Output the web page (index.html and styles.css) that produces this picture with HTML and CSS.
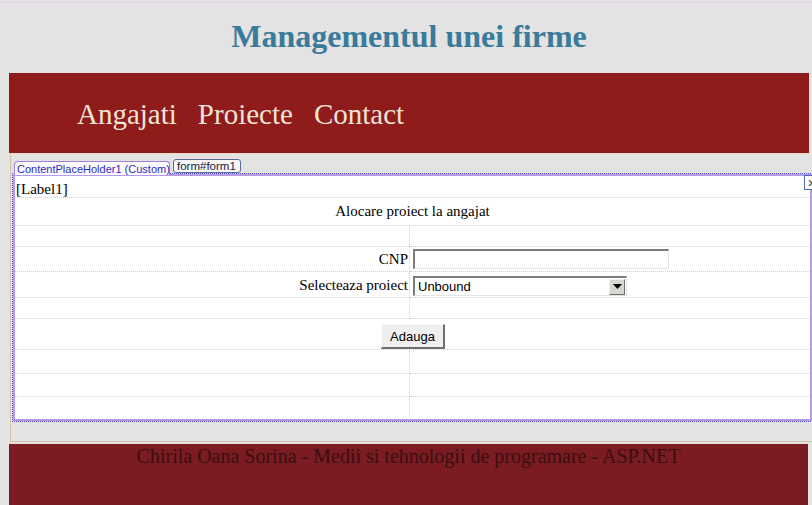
FILE: index.html
```html
<!DOCTYPE html>
<html lang="ro">
<head>
<meta charset="utf-8">
<title>Managementul unei firme</title>
<link rel="stylesheet" href="styles.css">
</head>
<body>
<div class="page">
  <header class="header">
    <h1 class="title">Managementul unei firme</h1>
  </header>
  <nav class="nav">
    <a class="nav-link">Angajati</a>
    <a class="nav-link">Proiecte</a>
    <a class="nav-link">Contact</a>
  </nav>
  <main class="content">
    <div class="tabs">
      <span class="tab tab-cph">ContentPlaceHolder1 (Custom)</span>
      <span class="tab tab-form">form#form1</span>
    </div>
    <div class="designer">
      <div class="panel">
        <span class="close-box">&#8250;</span>
        <div class="label-line">[Label1]</div>
        <div class="form-grid">
          <div class="cell span2 row-title">Alocare proiect la angajat</div>
          <div class="cell left row-gap1"></div><div class="cell row-gap1"></div>
          <div class="cell left row-cnp">CNP</div>
          <div class="cell row-cnp"><input class="text-input" type="text"></div>
          <div class="cell left row-sel">Selecteaza proiect</div>
          <div class="cell row-sel">
            <div class="select-box"><span class="select-text">Unbound</span><span class="select-btn"><svg width="9" height="5" viewBox="0 0 9 5"><path d="M0 0h9L4.5 5z" fill="#000"/></svg></span></div>
          </div>
          <div class="cell left row-gap2"></div><div class="cell row-gap2"></div>
          <div class="cell span2 row-btn"><button class="btn" type="button">Adauga</button></div>
          <div class="cell left row-e1"></div><div class="cell row-e1"></div>
          <div class="cell left row-e2"></div><div class="cell row-e2"></div>
          <div class="cell left row-e3 last"></div><div class="cell row-e3 last"></div>
        </div>
      </div>
    </div>
  </main>
  <footer class="footer">Chirila Oana Sorina - Medii si tehnologii de programare - ASP.NET</footer>
</div>
</body>
</html>
```

FILE: styles.css
```css
html, body {
  margin: 0;
  padding: 0;
  overflow: hidden;
}
body {
  background: #e3e3e3;
  font-family: "Liberation Serif", "Times New Roman", serif;
  width: 812px;
  height: 505px;
}
.page {
  padding-top: 2px;
  width: 830px;
}
.header {
  border-top: 1px solid #e9d0ea;
  height: 70px;
  width: 818px;
}
.title {
  margin: 0;
  padding-top: 15px;
  text-align: center;
  font-size: 32px;
  line-height: 36px;
  font-weight: bold;
  color: #3a7b9b;
}
.nav {
  margin-left: 9px;
  width: 800px;
  height: 80px;
  box-sizing: border-box;
  background: #8f1b1b;
  padding: 25px 0 0 68px;
  display: flex;
  gap: 21px;
  font-size: 29px;
  line-height: 32px;
}
.nav-link {
  color: #f0e4d6;
  text-decoration: none;
}
.content {
  margin-left: 10px;
  width: 806px;
  height: 287px;
  border: 1px solid #d8c3a9;
  border-top-color: #eed9c5;
}
.tabs {
  height: 19px;
  display: flex;
  align-items: flex-end;
  padding-left: 3px;
  font-family: "Liberation Sans", Arial, sans-serif;
}
.tab {
  box-sizing: border-box;
  display: block;
  position: relative;
  z-index: 1;
}
.tab-cph {
  width: 156px;
  height: 14px;
  margin-bottom: -2px;
  border: 1px solid #9d82d8;
  border-bottom: none;
  border-radius: 4px 4px 0 0;
  background: #fbfaff;
  color: #2d2dbd;
  font-size: 11px;
  line-height: 14px;
  padding-left: 2px;
  white-space: nowrap;
}
.tab-form {
  width: 68px;
  height: 14px;
  margin-left: 3px;
  border: 1px solid #5d6b94;
  border-radius: 3px;
  background: #f7f7f7;
  color: #1d1d3a;
  font-size: 11.5px;
  line-height: 12px;
  padding-left: 3px;
  white-space: nowrap;
}
.designer {
  margin-left: 1px;
  width: 801px;
  border: 1px dotted #4a4ad0;
  box-sizing: border-box;
}
.panel {
  position: relative;
  border: 2px solid #b59ae6;
  background: #fff;
  height: 243px;
}
.close-box {
  position: absolute;
  left: 789px;
  top: -1px;
  width: 15px;
  height: 15px;
  box-sizing: border-box;
  border: 1px solid #4a67b0;
  background: #fff;
  font-family: "Liberation Sans", Arial, sans-serif;
  font-size: 15px;
  line-height: 12px;
  padding-left: 3px;
  color: #333;
}
.label-line {
  height: 22px;
  box-sizing: border-box;
  padding-top: 5px;
  padding-left: 1px;
  font-size: 15px;
  line-height: 16px;
  color: #000;
  border-bottom: 1px dotted #cfcfcf;
}
.form-grid {
  display: grid;
  grid-template-columns: 395px 400px;
  grid-template-rows: 28px 21px 25px 26px 21px 31px 24px 23px 21px;
  font-size: 15px;
  color: #000;
}
.cell {
  box-sizing: border-box;
  border-bottom: 1px dotted #cfcfcf;
}
.cell.last {
  border-bottom: none;
}
.cell.left {
  border-right: 1px dotted #cfcfcf;
  text-align: right;
  padding-right: 1px;
}
.span2 {
  grid-column: span 2;
  text-align: center;
}
.row-title {
  line-height: 27px;
}
.row-cnp.left {
  line-height: 24px;
}
.row-sel.left {
  padding-top: 2px;
  line-height: 23px;
}
.text-input {
  display: block;
  margin: 2px 0 0 3px;
  width: 256px;
  height: 20px;
  box-sizing: border-box;
  border-style: solid;
  border-width: 2px 1px 1px 2px;
  border-color: #7c7c7c #e4e4e4 #e4e4e4 #7c7c7c;
  background: #fff;
  padding: 0;
}
.select-box {
  margin: 4px 0 0 3px;
  width: 214px;
  height: 20px;
  box-sizing: border-box;
  border-style: solid;
  border-width: 2px 1px 1px 2px;
  border-color: #7c7c7c #e4e4e4 #e4e4e4 #7c7c7c;
  background: #fff;
  display: flex;
  align-items: center;
  justify-content: space-between;
}
.select-text {
  font-family: "Liberation Sans", Arial, sans-serif;
  font-size: 13px;
  line-height: 16px;
  padding-left: 3px;
  color: #000;
}
.select-btn {
  width: 16px;
  height: 16px;
  box-sizing: border-box;
  margin-right: 1px;
  background: #d8d6d0;
  border-style: solid;
  border-width: 1px;
  border-color: #f4f4f4 #6e6e6e #6e6e6e #f4f4f4;
  display: flex;
  align-items: center;
  justify-content: center;
}
.row-btn {
  padding-top: 5px;
}
.btn {
  width: 64px;
  height: 25px;
  box-sizing: border-box;
  background: #efefef;
  border-style: solid;
  border-width: 1px 2px 2px 1px;
  border-color: #fafafa #6e6e6e #6e6e6e #fafafa;
  font-family: "Liberation Sans", Arial, sans-serif;
  font-size: 13px;
  color: #000;
  padding: 0;
  margin-left: 1px;
}
.footer {
  margin-top: 2px;
  margin-left: 9px;
  width: 799px;
  height: 70px;
  box-sizing: border-box;
  background: #7b1b22;
  color: #3a0f11;
  text-align: center;
  font-size: 20px;
  line-height: 22px;
  padding-top: 1px;
}
```
